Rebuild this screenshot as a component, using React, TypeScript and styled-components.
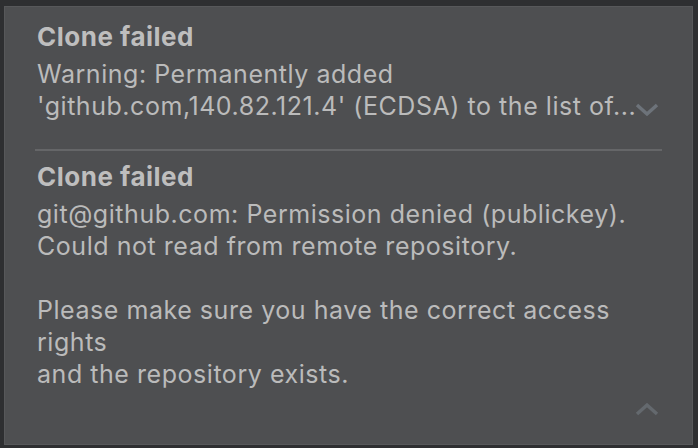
import React from "react";
import styled, { createGlobalStyle } from "styled-components";

const Global = createGlobalStyle`
  html, body { margin: 0; padding: 0; background: #2e2f31; }
  body { width: 698px; height: 448px; overflow: hidden; }
  #root { width: 698px; height: 448px; }
`;

const Frame = styled.div`
  box-sizing: border-box;
  width: 698px;
  height: 448px;
  padding: 6px 5px 3px 4px;
  display: flex;
`;

const Panel = styled.div`
  box-sizing: border-box;
  flex: 1;
  background: #4e4f51;
  border: 1px solid #57585a;
  padding: 14px 30px 0 32px;
  display: flex;
  flex-direction: column;
  font-family: Inter, "Liberation Sans", sans-serif;
  color: #bbbbbb;
`;

const Notification = styled.div<{ $last?: boolean }>`
  position: relative;
  display: flex;
  flex-direction: column;
  gap: 5px;
  padding-bottom: ${(p) => (p.$last ? "0" : "27px")};
  margin-bottom: ${(p) => (p.$last ? "0" : "10px")};
  border-bottom: ${(p) => (p.$last ? "none" : "2px solid #656668")};
  margin-left: -2px;
  padding-left: 2px;
`;

const Title = styled.div`
  font-size: 26px;
  line-height: 32px;
  font-weight: 700;
  letter-spacing: 0.5px;
  color: #bebebe;
`;

const Body = styled.div`
  font-size: 25px;
  line-height: 32px;
  letter-spacing: 0.54px;
  white-space: nowrap;
`;

const Line = styled.div<{ $blank?: boolean }>`
  height: 32px;
`;

const Chevron = styled.svg<{ $top: number }>`
  position: absolute;
  right: 3px;
  top: ${(p) => p.$top}px;
  width: 24px;
  height: 16px;
`;

export default function App() {
  return (
    <>
      <Global />
      <Frame>
        <Panel>
          <Notification>
            <Title>Clone failed</Title>
            <Body>
              <Line>Warning: Permanently added</Line>
              <Line>'github.com,140.82.121.4' (ECDSA) to the list of...</Line>
            </Body>
            <Chevron $top={81} viewBox="0 0 24 16">
              <path d="M2 3 L12 12 L22 3" fill="none" stroke="#6d737a" strokeWidth="3.5" />
            </Chevron>
          </Notification>
          <Notification $last>
            <Title>Clone failed</Title>
            <Body>
              <Line>git@github.com: Permission denied (publickey).</Line>
              <Line>Could not read from remote repository.</Line>
              <Line $blank />
              <Line>Please make sure you have the correct access</Line>
              <Line>rights</Line>
              <Line>and the repository exists.</Line>
            </Body>
            <Chevron $top={240} viewBox="0 0 24 16">
              <path d="M2 13 L12 4 L22 13" fill="none" stroke="#64696e" strokeWidth="3.5" />
            </Chevron>
          </Notification>
        </Panel>
      </Frame>
    </>
  );
}
